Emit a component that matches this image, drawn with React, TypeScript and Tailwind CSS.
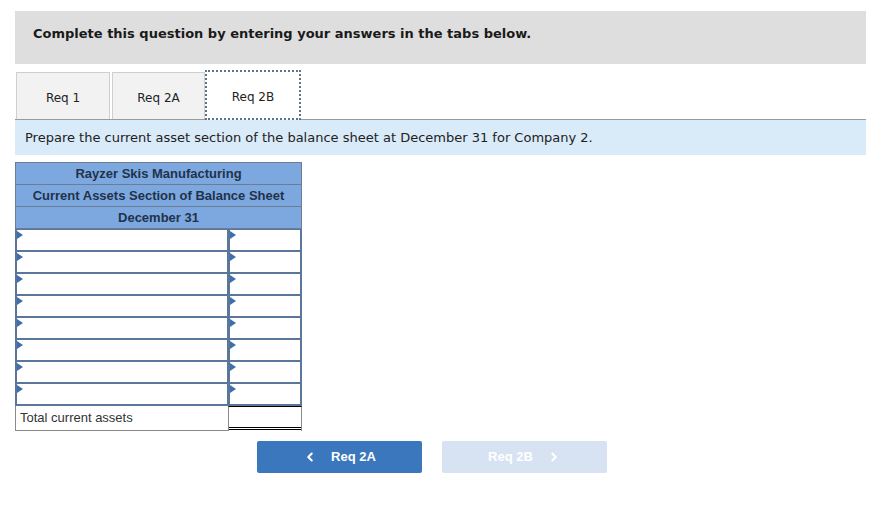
import { ChevronLeft, ChevronRight } from "lucide-react";

const verdana = "font-['Verdana','DejaVu_Sans',sans-serif]";
const arial = "font-['Liberation_Sans',Arial,sans-serif]";

function Tab({ label, active, className }: { label: string; active?: boolean; className: string }) {
  return (
    <div
      className={`flex items-center justify-center pt-[3px] text-[12px] text-[#222] ${verdana} ${className} ${
        active
          ? "relative z-10 -mb-px h-[50px] border-2 border-dotted border-[#5e7386] bg-white"
          : "h-[47px] border border-b-0 border-[#cfcfcf] bg-[#f2f2f2]"
      }`}
    >
      {label}
    </div>
  );
}

function Marker() {
  return (
    <span className="absolute left-0 top-[1px] h-0 w-0 border-y-[4px] border-l-[6px] border-y-transparent border-l-[#3f6fab]" />
  );
}

function InputRow() {
  return (
    <div className="flex h-[22px] border-b-2 border-[#5a7699]">
      <div className="relative w-[213px] border-r-[3px] border-[#5a7699] bg-white">
        <Marker />
      </div>
      <div className="relative flex-1 bg-white">
        <Marker />
      </div>
    </div>
  );
}

export default function App() {
  const headers = ["Rayzer Skis Manufacturing", "Current Assets Section of Balance Sheet", "December 31"];
  return (
    <div className="min-h-[512px] w-[891px] bg-white px-[15px] pt-[11px]">
      <div className="w-[851px]">
        <div className={`h-[53px] bg-[#dedede] pl-[18px] pt-[15px] text-[13px] font-bold leading-[16px] text-[#1a1a1a] ${verdana}`}>
          Complete this question by entering your answers in the tabs below.
        </div>

        <div className="flex h-[56px] items-end border-b border-[#9a9a9a]">
          <Tab label="Req 1" className="ml-px w-[94px]" />
          <Tab label="Req 2A" className="ml-[2px] w-[93px]" />
          <Tab label="Req 2B" active className="w-[96px]" />
        </div>

        <div className={`flex h-[35px] items-center bg-[#d9eaf9] pl-[10px] pt-px text-[13px] text-[#222] ${verdana}`}>
          Prepare the current asset section of the balance sheet at December 31 for Company 2.
        </div>

        <div className={`mt-[7px] w-[287px] ${arial}`}>
          <div className="border border-[#6b7d92] bg-[#7ca8df]">
            {headers.map((h, i) => (
              <div
                key={h}
                className={`flex items-center justify-center text-[13px] font-bold text-[#22324a] ${
                  i > 0 ? "h-[22px] border-t border-[#6b7d92]" : "h-[21px]"
                }`}
              >
                {h}
              </div>
            ))}
          </div>
          <div className="border-x-2 border-t border-[#5a7699]">
            {Array.from({ length: 8 }).map((_, i) => (
              <InputRow key={i} />
            ))}
          </div>
          <div className="flex h-[25px]">
            <div className="flex w-[213px] items-center border-b border-l border-[#8a8a8a] pl-[4px] text-[13px] text-[#333]">
              Total current assets
            </div>
            <div className="flex-1 border-x border-t border-[#8a8a8a] border-t-black">
              <div className="mt-[20px] h-[3px] border-y border-black" />
            </div>
          </div>
        </div>

        <div className={`mt-[10px] flex pl-[242px] text-[13px] font-bold text-white ${arial}`}>
          <div className="flex h-[32px] w-[165px] items-center justify-center rounded-[2px] bg-[#3a77bd]">
            <ChevronLeft size={14} strokeWidth={3.5} className="mr-[14px]" />
            Req 2A
          </div>
          <div className="ml-[20px] flex h-[32px] w-[165px] items-center justify-center rounded-[2px] bg-[#d7e3f2]">
            Req 2B
            <ChevronRight size={14} strokeWidth={3.5} className="ml-[14px]" />
          </div>
        </div>
      </div>
    </div>
  );
}
